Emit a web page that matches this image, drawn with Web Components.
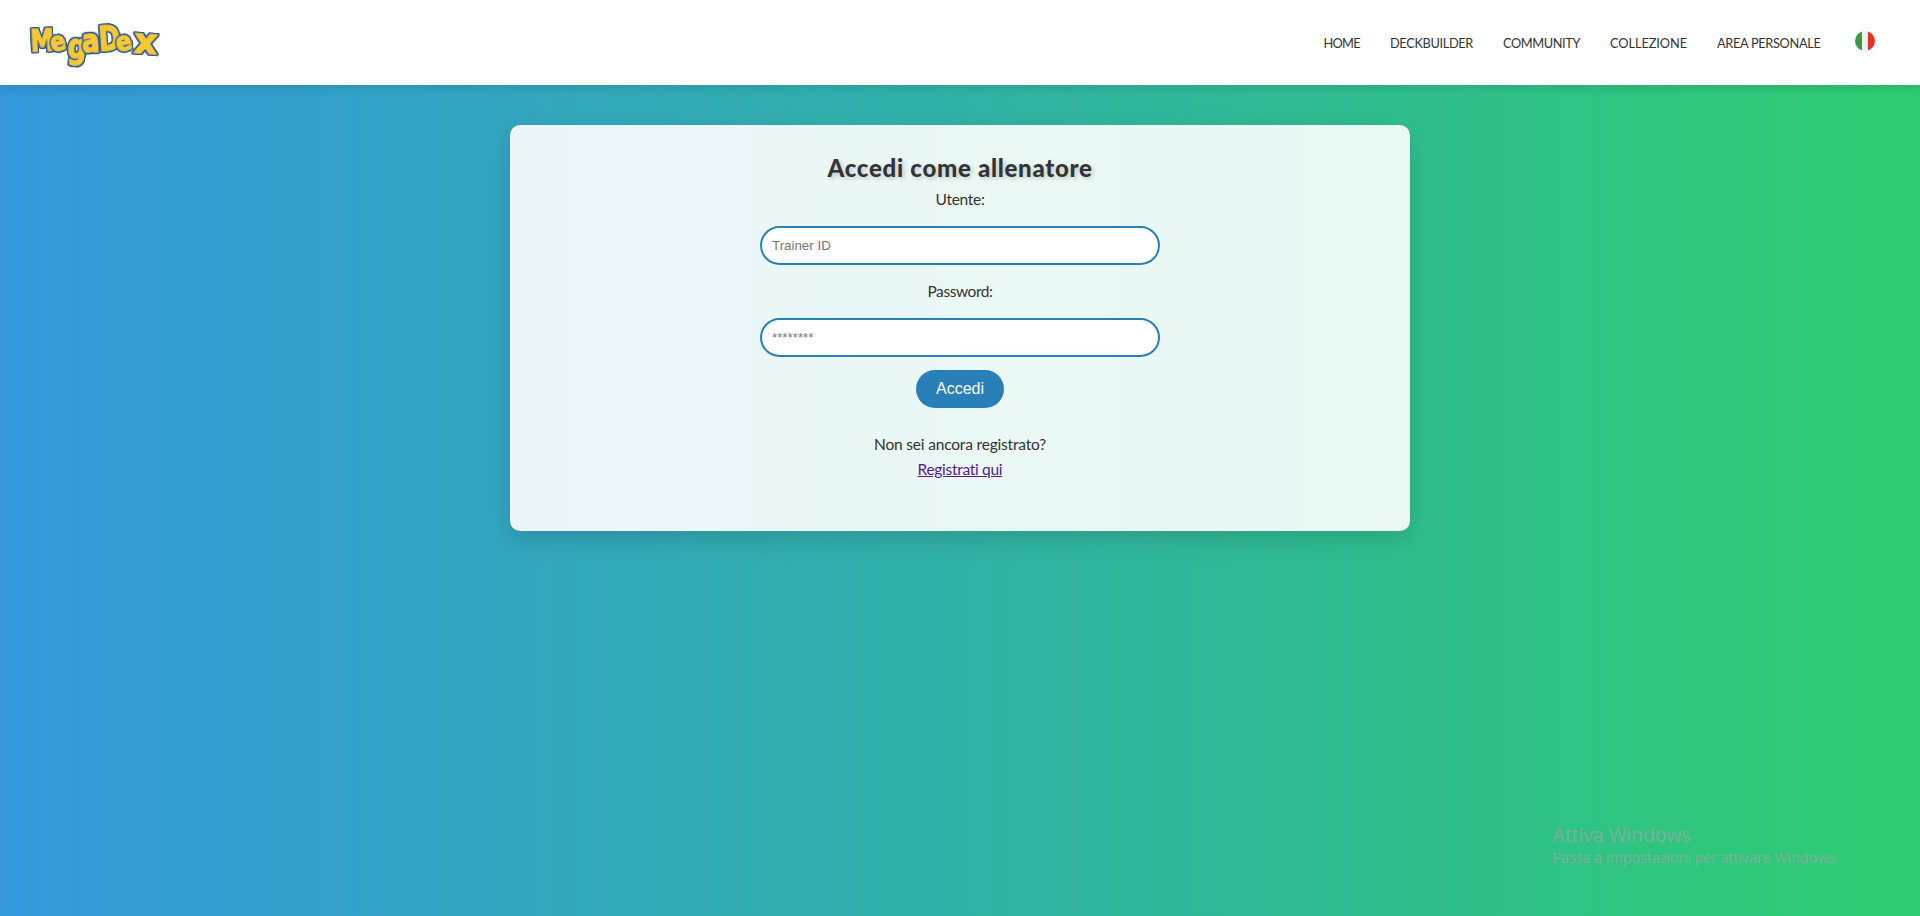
<!DOCTYPE html>
<html lang="it">
<head>
<meta charset="utf-8">
<title>MegaDex - Accedi</title>
<style>
html,body{margin:0;height:100%}
body{font-family:Lato,"Liberation Sans",sans-serif;color:#333;overflow:hidden}
</style>
</head>
<body>
<mega-app></mega-app>
<script>
const define=(name,html,setup)=>customElements.define(name,class extends HTMLElement{
  constructor(){super();this.attachShadow({mode:"open"}).innerHTML=html}
  connectedCallback(){if(setup)setup(this)}
});

/* One line of text spread evenly over a given width. */
define("fit-text",`<style>:host{display:inline-block;white-space:nowrap;text-align:left}span{display:inline-block}:host([underlined]) span{text-decoration:underline}</style><span><slot></slot></span>`,el=>{
  const w=parseFloat(el.getAttribute("width")),s=el.shadowRoot.querySelector("span");
  el.style.width=w+"px";
  requestAnimationFrame(()=>{
    const n=el.textContent.length;
    s.style.letterSpacing=(w-s.getBoundingClientRect().width)/n+"px";
  });
});

/* Each letter sits at its own tilt: heavy yellow letters, with a thin blue edge and a dark lower-right shade. */
define("mega-logo",`<style>:host{display:block;width:130px;height:45px}svg{display:block;overflow:visible}
text{font-family:"DejaVu Sans",sans-serif;font-weight:bold;fill:#f8c832;stroke:#f8c832;stroke-width:1.4px;stroke-linejoin:miter;stroke-miterlimit:3;
filter:drop-shadow(1px 0 0 #2d5ba3) drop-shadow(-1px 0 0 #2d5ba3) drop-shadow(0 1px 0 #2d5ba3) drop-shadow(0 -1px 0 #2d5ba3)}
g{filter:drop-shadow(.8px .8px 0 #172746)}</style>
<svg width="130" height="45" viewBox="30 20 130 45" aria-label="MegaDex">
<g>
<text transform="translate(31 51.500) rotate(-3) scale(.76 1)" font-size="31">M</text>
<text transform="translate(52.500 52.500) rotate(-14) scale(.87 1)" font-size="26">e</text>
<text transform="translate(67 57.500) rotate(4) scale(.85 1.100)" font-size="31">g</text>
<text transform="translate(82.500 52.500) rotate(-3) scale(.93 1.120)" font-size="28">a</text>
<text transform="translate(99.500 51) rotate(-4) scale(.76 1)" font-size="34">D</text>
<text transform="translate(118 52.500) rotate(-14) scale(.9 1)" font-size="26">e</text>
<text transform="translate(133.500 52.500) rotate(4) scale(1.050 1)" font-size="34">x</text>
</g></svg>`);

define("italy-flag",`<style>:host{display:block;width:20px;height:20px;border-radius:50%;background:linear-gradient(90deg,#3b9a4b 0 7px,#f0f0f0 7px 13px,#e73027 13px)}</style>`);

define("nav-link",`<style>:host{display:block}a{display:block;font-size:12.8px;line-height:18px;color:#333;text-decoration:none}</style><a><slot></slot></a>`);

define("site-header",`<style>:host{display:flex;box-sizing:border-box;height:85px;padding:0 45px 0 30px;align-items:center;justify-content:space-between;background:#fff;box-shadow:0 4px 8px rgba(0,0,0,.1);position:relative}
nav{display:flex;gap:30px;align-items:center}nav-link{margin-top:1px}italy-flag{margin:-3px 0 0 4.500px}</style>
<mega-logo></mega-logo>
<nav>
<nav-link><fit-text width="36.500">HOME</fit-text></nav-link>
<nav-link><fit-text width="83">DECKBUILDER</fit-text></nav-link>
<nav-link><fit-text width="77">COMMUNITY</fit-text></nav-link>
<nav-link><fit-text width="77">COLLEZIONE</fit-text></nav-link>
<nav-link><fit-text width="103.500">AREA PERSONALE</fit-text></nav-link>
<italy-flag></italy-flag>
</nav>`);

define("pill-field",`<style>:host{display:flex;flex-direction:column;align-items:center}
label{font-size:15.500px;line-height:24px;margin-bottom:15px}
input{box-sizing:border-box;width:400px;height:39px;border:2px solid #2980b9;border-radius:20px;padding:10px;background:#fff;font:13.333px "Liberation Sans",Arial,sans-serif;color:#333;outline:0}
input::placeholder{color:#757575}</style>
<label><slot></slot></label><input>`,el=>{
  const i=el.shadowRoot.querySelector("input");
  i.placeholder=el.getAttribute("hint");i.type=el.getAttribute("type")||"text";
});

define("login-card",`<style>:host{display:flex;flex-direction:column;align-items:center;box-sizing:border-box;width:900px;height:406px;padding-top:24px;border-radius:10px;background:rgba(255,255,255,.9);box-shadow:0 8px 24px rgba(0,0,0,.14)}
h1{margin:0;font-size:24px;line-height:38px;font-weight:900;text-shadow:2px 2px 4px rgba(0,0,0,.2)}
pill-field+pill-field{margin-top:14px}
button{margin-top:13px;width:88px;height:38px;border:0;border-radius:20px;background:#2980b9;color:#fff;font:16px "Liberation Sans",Arial,sans-serif;padding:0}
p{margin:24px 0 0;font-size:15.500px;line-height:25px;text-align:center}
a{display:inline-block;color:#551a8b;text-decoration:none}</style>
<h1><fit-text width="265">Accedi come allenatore</fit-text></h1>
<pill-field hint="Trainer ID"><fit-text width="49">Utente:</fit-text></pill-field>
<pill-field type="password" hint="********"><fit-text width="65">Password:</fit-text></pill-field>
<button>Accedi</button>
<p><fit-text width="172">Non sei ancora registrato?</fit-text><br><a href="#"><fit-text underlined width="85">Registrati qui</fit-text></a></p>`);

define("windows-notice",`<style>:host{position:absolute;left:1552.500px;top:822px;font-family:"Open Sans","Noto Sans",sans-serif;color:rgba(160,165,165,.72)}
div{font-size:19.500px;line-height:26px}div+div{font-size:14.500px;line-height:20px}</style>
<div><fit-text width="138">Attiva Windows</fit-text></div><div><fit-text width="286">Passa a Impostazioni per attivare Windows.</fit-text></div>`);

define("mega-app",`<style>:host{display:block;height:100vh;position:relative;background:linear-gradient(to right,#3498db,#2ecc71)}
main{display:flex;justify-content:center;padding-top:40px}</style>
<site-header></site-header><main><login-card></login-card></main><windows-notice></windows-notice>`);
</script>
</body>
</html>
